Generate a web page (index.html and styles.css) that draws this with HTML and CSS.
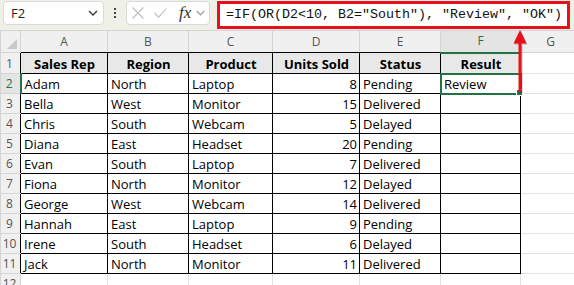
FILE: index.html
```html
<!DOCTYPE html>
<html>
<head>
<meta charset="utf-8">
<link rel="stylesheet" href="styles.css">
</head>
<body>
<div class="toolbar">
  <div class="namebox"><span>F2</span>
    <svg class="chev" width="10" height="6" viewBox="0 0 10 6"><path d="M1 1 L5 5 L9 1" fill="none" stroke="#333" stroke-width="1.3"/></svg>
  </div>
  <div class="dots"><i></i><i></i><i></i></div>
  <div class="fxbox">
    <svg class="ix" width="12" height="12" viewBox="0 0 12 12"><path d="M0.5 0.5 L11.5 11.5 M11.5 0.5 L0.5 11.5" stroke="#bdbdbd" stroke-width="1.1" fill="none"/></svg>
    <svg class="ick" width="13" height="10" viewBox="0 0 13 10"><path d="M0.5 5 L4.5 9.2 L12.5 0.5" stroke="#bdbdbd" stroke-width="1.1" fill="none"/></svg>
    <span class="fx">fx</span>
    <svg class="chev2" width="9" height="6" viewBox="0 0 9 6"><path d="M0.8 1 L4.5 4.8 L8.2 1" fill="none" stroke="#9a9a9a" stroke-width="1.2"/></svg>
  </div>
  <div class="formula">=IF(OR(D2&lt;10, B2="South"), "Review", "OK")</div>
</div>
<table class="grid">
  <colgroup>
    <col class="w-rh"><col class="w-a"><col class="w-b"><col class="w-c"><col class="w-d"><col class="w-e"><col class="w-f"><col class="w-g">
  </colgroup>
  <tr class="r-ch">
    <td class="ch corner"><span class="tri"></span></td>
    <td class="ch cb">A</td><td class="ch cb">B</td><td class="ch cb">C</td><td class="ch cb">D</td><td class="ch cb">E</td><td class="ch sel">F</td><td class="ch">G</td>
  </tr>
  <tr class="r-1">
    <td class="rh rb">1</td>
    <td class="d h">Sales Rep</td><td class="d h">Region</td><td class="d h">Product</td><td class="d h">Units Sold</td><td class="d h">Status</td><td class="d h">Result</td><td class="e"></td>
  </tr>
  <tr class="r">
    <td class="rh rsel">2</td>
    <td class="d">Adam</td><td class="d">North</td><td class="d">Laptop</td><td class="d n">8</td><td class="d">Pending</td><td class="d active">Review<span class="handle"></span></td><td class="e"></td>
  </tr>
  <tr class="r">
    <td class="rh rb">3</td>
    <td class="d">Bella</td><td class="d">West</td><td class="d">Monitor</td><td class="d n">15</td><td class="d">Delivered</td><td class="d"></td><td class="e"></td>
  </tr>
  <tr class="r">
    <td class="rh rb">4</td>
    <td class="d">Chris</td><td class="d">South</td><td class="d">Webcam</td><td class="d n">5</td><td class="d">Delayed</td><td class="d"></td><td class="e"></td>
  </tr>
  <tr class="r">
    <td class="rh rb">5</td>
    <td class="d">Diana</td><td class="d">East</td><td class="d">Headset</td><td class="d n">20</td><td class="d">Pending</td><td class="d"></td><td class="e"></td>
  </tr>
  <tr class="r">
    <td class="rh rb">6</td>
    <td class="d">Evan</td><td class="d">South</td><td class="d">Laptop</td><td class="d n">7</td><td class="d">Delivered</td><td class="d"></td><td class="e"></td>
  </tr>
  <tr class="r">
    <td class="rh rb">7</td>
    <td class="d">Fiona</td><td class="d">North</td><td class="d">Monitor</td><td class="d n">12</td><td class="d">Delayed</td><td class="d"></td><td class="e"></td>
  </tr>
  <tr class="r">
    <td class="rh rb">8</td>
    <td class="d">George</td><td class="d">West</td><td class="d">Webcam</td><td class="d n">14</td><td class="d">Delivered</td><td class="d"></td><td class="e"></td>
  </tr>
  <tr class="r">
    <td class="rh rb">9</td>
    <td class="d">Hannah</td><td class="d">East</td><td class="d">Laptop</td><td class="d n">9</td><td class="d">Pending</td><td class="d"></td><td class="e"></td>
  </tr>
  <tr class="r">
    <td class="rh rb">10</td>
    <td class="d">Irene</td><td class="d">South</td><td class="d">Headset</td><td class="d n">6</td><td class="d">Delayed</td><td class="d"></td><td class="e"></td>
  </tr>
  <tr class="r">
    <td class="rh rb">11</td>
    <td class="d">Jack</td><td class="d">North</td><td class="d">Monitor</td><td class="d n">11</td><td class="d">Delivered</td><td class="d"></td><td class="e"></td>
  </tr>
  <tr class="r">
    <td class="rh">12</td>
    <td class="e"></td><td class="e"></td><td class="e"></td><td class="e"></td><td class="e"></td><td class="e"></td><td class="e"></td>
  </tr>
</table>
<svg class="arrow" width="26" height="70" viewBox="0 0 26 70">
  <g fill="#e8101a">
    <path d="M12 2 L5.5 15.5 L18.5 15.5 Z"/>
    <rect x="10.5" y="14" width="3" height="50"/>
  </g>
</svg>
</body>
</html>
```
FILE: styles.css
```css
html, body {
  margin: 0;
  padding: 0;
}
body {
  width: 574px;
  height: 285px;
  overflow: hidden;
  background: #fff;
  position: relative;
  font-family: "Open Sans", sans-serif;
}
.toolbar {
  height: 30px;
  box-sizing: border-box;
  background: #eff0e6;
  display: flex;
  align-items: flex-start;
  padding: 1px 0 0 3px;
}
.namebox {
  width: 101px;
  height: 24px;
  box-sizing: border-box;
  background: #fff;
  border: 1px solid #d9d9d9;
  border-radius: 4px;
  display: flex;
  align-items: center;
  justify-content: space-between;
  padding: 0 5px 0 7px;
  font-size: 13px;
  color: #222;
}
.dots {
  width: 22px;
  height: 24px;
  display: flex;
  flex-direction: column;
  align-items: center;
  justify-content: center;
  gap: 2px;
}
.dots i {
  display: block;
  width: 2px;
  height: 2px;
  background: #444;
}
.fxbox {
  width: 84px;
  height: 24px;
  box-sizing: border-box;
  background: #fff;
  border: 1px solid #d9d9d9;
  border-radius: 4px;
  display: flex;
  align-items: center;
}
.ix { margin-left: 5px; }
.ick { margin-left: 10px; }
.fx {
  margin-left: 12px;
  font-family: "Liberation Serif", serif;
  font-style: italic;
  font-size: 17px;
  line-height: 20px;
  color: #333;
}
.chev2 { margin-left: 5px; }
.formula {
  margin-left: 7px;
  width: 353px;
  height: 28px;
  box-sizing: border-box;
  border: 3px solid #e8101a;
  background: #fff;
  font-family: "Liberation Mono", monospace;
  font-size: 13.33px;
  line-height: 22px;
  padding-left: 6px;
  white-space: pre;
  color: #111;
}
.grid {
  border-collapse: collapse;
  table-layout: fixed;
  width: 580px;
}
.w-rh { width: 20px; }
.w-a { width: 87px; }
.w-b { width: 81px; }
.w-c { width: 84px; }
.w-d { width: 87px; }
.w-e { width: 81px; }
.w-f { width: 80px; }
.w-g { width: 60px; }
.grid td {
  border: 1px solid #e1e1e1;
  padding: 0 2px 1px 3px;
  vertical-align: bottom;
  font-size: 13px;
  line-height: 16px;
  white-space: nowrap;
  overflow: visible;
  color: #000;
}
.r-ch { height: 22px; }
.r-1 { height: 21px; }
.r { height: 20px; }
.grid td.ch {
  background: #f0f0f0;
  border-color: #d4d4d4;
  text-align: center;
  vertical-align: middle;
  font-size: 12px;
  color: #555;
  padding: 0;
}
.grid td.cb { border-bottom-color: #000; }
.grid td.sel {
  background: #e4e4e4;
  color: #217346;
  border-bottom: 2px solid #217346;
}
.grid td.corner {
  position: relative;
  border-color: #d4d4d4;
}
.tri {
  position: absolute;
  right: 3px;
  bottom: 3px;
  width: 0;
  height: 0;
  border-left: 10px solid transparent;
  border-bottom: 10px solid #c8c8c8;
}
.grid td.rh {
  background: #f0f0f0;
  border-color: #d4d4d4;
  text-align: center;
  font-size: 12px;
  color: #555;
  padding: 0 2px 1px 0;
}
.grid td.rb { border-right-color: #000; }
.grid td.rsel {
  background: #e4e4e4;
  color: #217346;
  border-right: 2px solid #217346;
}
.grid td.d { border-color: #000; }
.grid td.h {
  background: #e8e8e8;
  font-weight: 700;
  text-align: center;
}
.grid td.n {
  text-align: right;
  padding-right: 2px;
}
.grid td.active {
  position: relative;
  outline: 2px solid #217346;
  outline-offset: -1px;
}
.handle {
  position: absolute;
  right: -3px;
  bottom: -3px;
  width: 5px;
  height: 5px;
  background: #217346;
  border: 1px solid #fff;
}
.arrow {
  position: absolute;
  left: 508px;
  top: 28px;
  filter: drop-shadow(1px 1px 0 rgba(0, 0, 0, 0.25));
}
```
